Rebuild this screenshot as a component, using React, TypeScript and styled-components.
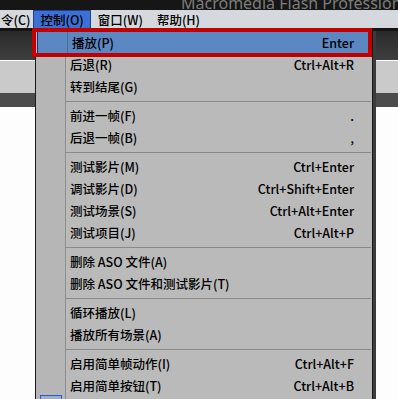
import styled, { createGlobalStyle } from "styled-components";

const GlobalStyle = createGlobalStyle`
  html, body {
    margin: 0;
    padding: 0;
    background: #fdfdfd;
    overflow: hidden;
  }
  body {
    font-family: "Noto Sans CJK SC", "Noto Sans", sans-serif;
  }
`;

declare interface MenuEntry {
    label?: string;
    shortcut?: string;
    active?: boolean;
    checked?: boolean;
    separator?: boolean;
}

const entries: MenuEntry[] = [
    { label: "播放(P)", shortcut: "Enter", active: true },
    { label: "后退(R)", shortcut: "Ctrl+Alt+R" },
    { label: "转到结尾(G)" },
    { separator: true },
    { label: "前进一帧(F)", shortcut: "." },
    { label: "后退一帧(B)", shortcut: "," },
    { separator: true },
    { label: "测试影片(M)", shortcut: "Ctrl+Enter" },
    { label: "调试影片(D)", shortcut: "Ctrl+Shift+Enter" },
    { label: "测试场景(S)", shortcut: "Ctrl+Alt+Enter" },
    { label: "测试项目(J)", shortcut: "Ctrl+Alt+P" },
    { separator: true },
    { label: "删除 ASO 文件(A)" },
    { label: "删除 ASO 文件和测试影片(T)" },
    { separator: true },
    { label: "循环播放(L)" },
    { label: "播放所有场景(A)" },
    { separator: true },
    { label: "启用简单帧动作(I)", shortcut: "Ctrl+Alt+F" },
    { label: "启用简单按钮(T)", shortcut: "Ctrl+Alt+B" },
    { label: "启用动态预览(W)", checked: true },
];

const topMenus = [
    { label: "令(C)", first: true },
    { label: "控制(O)", open: true },
    { label: "窗口(W)" },
    { label: "帮助(H)" },
];

function App(): React.ReactElement {
    return (
        <Screen>
            <GlobalStyle />
            <TitleBar>
                <TitleText>Macromedia Flash Professional 8</TitleText>
            </TitleBar>
            <MenuBar>
                {topMenus.map((m) => (
                    <MenuBarItem key={m.label} $open={m.open} $first={m.first}>
                        {m.label}
                    </MenuBarItem>
                ))}
            </MenuBar>
            <Workspace>
                <ToolStrip />
                <Band />
                <Stripe />
                <Canvas />
            </Workspace>

            <Dropdown>
                {entries.map((e, i) =>
                    e.separator ? (
                        <Separator key={i}>
                            <IconColumn />
                            <SeparatorLine />
                        </Separator>
                    ) : (
                        <Row key={i} $active={e.active}>
                            <IconColumn $active={e.active}>
                                {e.checked && <CheckBox />}
                            </IconColumn>
                            <Label>{e.label}</Label>
                            <Shortcut>{e.shortcut}</Shortcut>
                        </Row>
                    )
                )}
            </Dropdown>

            <Annotation />
        </Screen>
    );
}

export default App;

const Screen = styled.div`
  position: relative;
  width: 398px;
  height: 399px;
  overflow: hidden;
  background: #fdfdfd;
`;

const TitleBar = styled.div`
  height: 10px;
  background: #161616;
  display: flex;
  align-items: flex-end;
  overflow: hidden;
  padding-left: 181px;
`;

const TitleText = styled.span`
  font-family: "Noto Sans", "DejaVu Sans", sans-serif;
  font-size: 16px;
  line-height: 14px;
  color: #7c7c7c;
  white-space: nowrap;
`;

const MenuBar = styled.div`
  display: flex;
  height: 18px;
  background: #d5d9dd;
`;

const MenuBarItem = styled.div<{ $open?: boolean; $first?: boolean }>`
  display: flex;
  align-items: center;
  padding: ${(p) => (p.$first ? "0 3px 0 1px" : "0 7px")};
  font-size: 12.5px;
  font-weight: 500;
  color: #000;
  background: ${(p) => (p.$open ? "#3d70d4" : "transparent")};
  box-shadow: ${(p) => (p.$open ? "inset 1px 1px 0 #1e3f9a, inset -1px 0 0 #1e3f9a" : "none")};
`;

const Workspace = styled.div`
  display: flex;
  flex-direction: column;
`;

const ToolStrip = styled.div`
  height: 32px;
  box-sizing: border-box;
  border-top: 3px solid #141414;
  background: linear-gradient(#2a2a2a, #3e3e3e);
`;

const Band = styled.div`
  height: 33px;
  box-sizing: border-box;
  border-top: 1px solid #ffffff;
  background: #cacaca;
`;

const Stripe = styled.div`
  height: 14px;
  background: #4c4c4c;
`;

const Canvas = styled.div`
  flex: 1;
  height: 300px;
  background: #fdfdfd;
`;

const Dropdown = styled.div`
  position: absolute;
  left: 35px;
  top: 28px;
  width: 338px;
  box-sizing: border-box;
  padding-top: 3px;
  background: #bababa;
  border: 1px solid #1a1a1a;
  box-shadow: 3px 3px 0 #3c3c3c;
`;

const Row = styled.div<{ $active?: boolean }>`
  display: grid;
  grid-template-columns: 30px 1fr auto;
  align-items: center;
  height: 22px;
  margin-left: ${(p) => (p.$active ? "1px" : "0")};
  padding-right: 18px;
  background: ${(p) => (p.$active ? "#5b87c2" : "transparent")};
  border-left: ${(p) => (p.$active ? "1px solid #1c2c84" : "none")};
  font-size: 12.5px;
  font-weight: 500;
  line-height: 22px;
  color: #000;
  white-space: nowrap;
`;

const IconColumn = styled.div<{ $active?: boolean }>`
  align-self: stretch;
  box-sizing: border-box;
  border-right: 1px solid ${(p) => (p.$active ? "#4a6c9c" : "#8e8e8e")};
  background: ${(p) => (p.$active ? "transparent" : "#b6b6b6")};
  display: flex;
  justify-content: center;
`;

const Label = styled.span`
  padding-left: 4px;
`;

const Shortcut = styled.span`
  text-align: right;
`;

const CheckBox = styled.div`
  width: 22px;
  height: 20px;
  margin-top: -2px;
  box-sizing: border-box;
  border: 1px solid #2a5cc0;
  background: #9aaed0;
`;

const Separator = styled.div`
  display: grid;
  grid-template-columns: 30px 1fr;
  height: 7px;
`;

const SeparatorLine = styled.div`
  align-self: center;
  height: 1px;
  margin-right: 1px;
  background: #8a8a8a;
`;

const Annotation = styled.div`
  position: absolute;
  left: 32px;
  top: 28px;
  width: 340px;
  height: 29px;
  box-sizing: border-box;
  border: 4px solid #c20000;
  pointer-events: none;
`;
